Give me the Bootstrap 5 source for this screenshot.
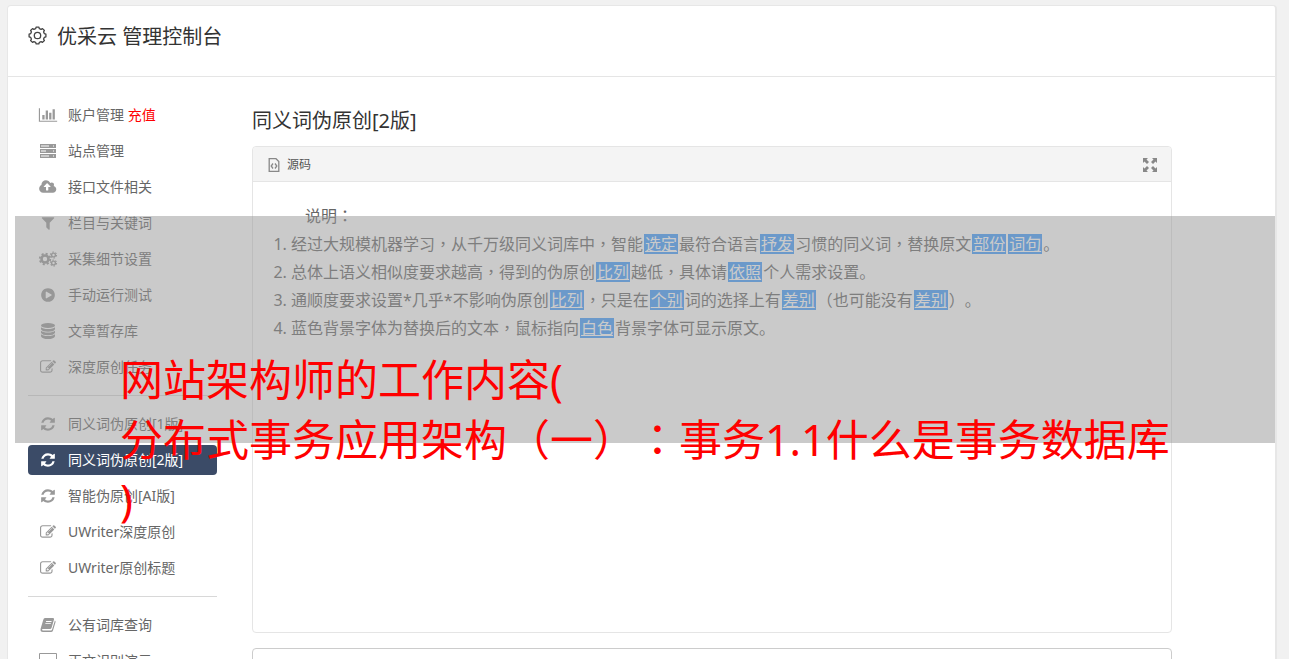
<!DOCTYPE html>
<html lang="zh-CN">
<head>
<meta charset="utf-8">
<meta name="viewport" content="width=device-width, initial-scale=1">
<title>优采云 管理控制台</title>
<link href="https://cdn.jsdelivr.net/npm/bootstrap@5.3.0/dist/css/bootstrap.min.css" rel="stylesheet">
<style>
body{background:#f1f1f1;color:#666;font-family:"Noto Sans","Noto Sans CJK SC",sans-serif;font-size:14px;line-height:20px;padding:5px 12px 0 7px;text-spacing-trim:space-all}
.console{border:1px solid #e7e7e7;border-right-width:2px;border-bottom:0;border-radius:4px 4px 0 0;background:#fff}
.console-head{height:71px;padding:16px 20px;border-bottom:1px solid #e5e5e5;gap:10px}
.console-head h1,.main h2{font-size:20px;line-height:30px;color:#333;font-weight:400}
.layout{padding:23px 103px 0 20px;gap:35px}
.side{width:189px}
.side .nav-link{display:flex;align-items:center;height:30px;margin-bottom:6px;padding:0 10px;color:#666;border-radius:4px;white-space:nowrap}
.side .nav-link svg{width:20px;height:16px;margin-right:10px;fill:#999;flex:none}
.side .nav-link.active{background:#3b4b67;color:#fff}
.side .nav-link.active svg{fill:#fff}
.side hr{margin:13px 0;border-color:#d8d8d8;opacity:1}
.recharge{color:#f00}
.main{padding-top:6px;min-width:0}
.main h2{margin-bottom:10px}
.editor{border:1px solid #e5e5e5;border-radius:4px}
.editor-bar{height:35px;padding:2px 14px 0 15px;background:#f4f4f4;border-bottom:1px solid #e5e5e5;font-size:12px;border-radius:4px 4px 0 0}
.bar-btn{border:0;background:none;padding:0;color:#555;display:flex;align-items:center;gap:7px}
.editor-body{min-height:450px;padding:20px;font-size:16px;line-height:28px}
.editor-body p{padding-left:32px}
.editor-body ol{padding-left:18px}
.mid{font-family:"Noto Sans","Noto Sans CJK TC",sans-serif}
.swap{background:#409cff;color:#fff;padding:0 1px;margin:0 1px;line-height:20px;display:inline-block}
.swap:hover{color:#fff}
.source{height:80px;margin-top:15px;border:1px solid #ccc;border-radius:4px;resize:none}
.banner{left:7px;right:0;top:210px;height:227px;padding:134px 0 0 105px;background:rgba(150,150,150,.5);color:#f00;font-size:43px;line-height:60px;pointer-events:none;white-space:nowrap}
</style>
</head>
<body class="vh-100 overflow-hidden">
<svg class="d-none">
<symbol id="chart" viewBox="0 0 2048 1792"><path d="M640 896v512h-256v-512h256zm384-512v1024h-256v-1024h256zm1024 1152v128h-2048v-1536h128v1408h1920zm-640-896v768h-256v-768h256zm384-384v1152h-256v-1152h256z"/></symbol>
<symbol id="server" viewBox="-2 -1 20 16"><path fill-rule="evenodd" d="M0 0h16v4H0zM1 1.500v1h8v-1zM13 1.500v1h1v-1zM0 5h16v4H0zM1 6.500v1h5v-1zM13 6.500v1h1v-1zM0 10h16v4H0zM1 11.500v1h8v-1zM13 11.500v1h1v-1z"/></symbol>
<symbol id="cloud" viewBox="0 0 1856 1792"><path d="M1216 864q0-14-9-23l-352-352q-9-9-23-9t-23 9l-351 351q-10 12-10 24 0 14 9 23t23 9h224v352q0 13 9.500 22.500t22.500 9.500h192q13 0 22.500-9.500t9.500-22.500v-352h224q13 0 22.500-9.500t9.500-22.500zm640 288q0 159-112.500 271.500t-271.500 112.500h-1088q-185 0-316.500-131.500t-131.500-316.500q0-130 70-240t188-165q-2-30-2-43 0-212 150-362t362-150q156 0 285.500 87t188.500 231q71-62 166-62 106 0 181 75t75 181q0 76-41 138 130 31 213.500 135.500t83.500 238.500z"/></symbol>
<symbol id="filter" viewBox="0 0 1792 1792"><path d="M1595 295q17 41-14 70l-493 493v742q0 42-39 59-13 5-25 5-27 0-45-19l-256-256q-19-19-19-45v-486l-493-493q-31-29-14-70 17-39 59-39h1280q42 0 59 39z"/></symbol>
<symbol id="cogs" viewBox="0 0 20 16"><g fill="none" stroke="#999"><circle cx="7" cy="8" r="3.500" stroke-width="2.600"/><circle cx="7" cy="8" r="5.300" stroke-width="1.800" stroke-dasharray="2.080 2.080"/><circle cx="15.500" cy="4" r="1.900" stroke-width="1.400"/><circle cx="15.500" cy="4" r="3" stroke-width="1.200" stroke-dasharray="1.570 1.570"/><circle cx="15.500" cy="12" r="1.900" stroke-width="1.400"/><circle cx="15.500" cy="12" r="3" stroke-width="1.200" stroke-dasharray="1.570 1.570"/></g></symbol>
<symbol id="play" viewBox="0 0 1792 1792"><path d="M896 128q209 0 385.500 103t279.500 279.500 103 385.500-103 385.500-279.500 279.500-385.500 103-385.500-103-279.500-279.500-103-385.500 103-385.500 279.500-279.500 385.500-103zm384 823q32-18 32-55t-32-55l-544-320q-31-19-64-1-32 19-32 56v640q0 37 32 56 16 8 32 8 17 0 32-9z"/></symbol>
<symbol id="db" viewBox="0 0 14 16"><ellipse cx="7" cy="2.500" rx="7" ry="2.500"/><path d="M0 4.200Q2 6 7 6t7-1.800v2Q13 8.700 7 8.700T0 6.200zM0 7.700Q2 9.500 7 9.500t7-1.800v2q-1 2.500-7 2.500T0 9.700zM0 11.200Q2 13 7 13t7-1.800v2Q13 16 7 16t-7-2.800z"/></symbol>
<symbol id="edit" viewBox="0 0 1792 1792"><path d="M888 1184l116-116-152-152-116 116v56h96v96h56zm440-720q-16-16-33 1l-350 350q-17 17-1 33t33-1l350-350q17-17 1-33zm80 594v190q0 119-84.500 203.500t-203.500 84.500h-832q-119 0-203.500-84.500t-84.500-203.500v-832q0-119 84.500-203.500t203.500-84.500h832q63 0 117 25 15 7 18 23 3 17-9 29l-49 49q-14 14-32 8-23-6-45-6h-832q-66 0-113 47t-47 113v832q0 66 47 113t113 47h832q66 0 113-47t47-113v-126q0-13 9-22l64-64q15-15 35-7t20 29zm-96-738l288 288-672 672h-288v-288zm444 132l-92 92-288-288 92-92q28-28 68-28t68 28l152 152q28 28 28 68t-28 68z"/></symbol>
<symbol id="refresh" viewBox="0 0 1792 1792"><path d="M1639 1056q0 5-1 7-64 268-268 434.500t-478 166.500q-146 0-282.500-55t-243.500-157l-129 129q-19 19-45 19t-45-19-19-45v-448q0-26 19-45t45-19h448q26 0 45 19t19 45-19 45l-137 137q71 66 161 102t187 36q134 0 250-65t186-179q11-17 53-117 8-23 30-23h192q13 0 22.500 9.500t9.500 22.500zm25-800v448q0 26-19 45t-45 19h-448q-26 0-45-19t-19-45 19-45l138-138q-148-137-349-137-134 0-250 65t-186 179q-11 17-53 117-8 23-30 23h-199q-13 0-22.500-9.500t-9.500-22.500v-7q65-268 270-434.500t480-166.500q146 0 284 55.500t245 156.500l130-129q19-19 45-19t45 19 19 45z"/></symbol>
<symbol id="book" viewBox="0 0 16 16"><path fill-rule="evenodd" d="M5 1h8q1.500 0 1 1.500L11.500 11q-.4 1-1.500 1H3q-1.200 0-1 .8t1.200.7H11q.8 0 1-.8l2.500-8 .4-1.200q1 .5.600 1.700L13 13.500Q12.500 15 11 15H3Q0 15 .6 11.800L3.200 3Q3.700 1 5 1zm1.200 3-.3.900h5.500l.3-.9zm-.7 2.200-.3.900h5.500l.3-.9z"/></symbol>
<symbol id="screen" viewBox="0 0 20 16"><path fill-rule="evenodd" d="M2 0h16q1 0 1 1v11q0 1-1 1h-6v2H8v-2H2q-1 0-1-1V1q0-1 1-1zm0 1v9h16V1z"/></symbol>
</svg>

<div class="console position-relative h-100">
  <header class="console-head d-flex align-items-start">
    <svg class="mt-1" width="19" height="19" viewBox="-9.500 -9.500 19 19" fill="none" stroke="#444" stroke-width="1.300" stroke-linejoin="round"><path d="M8.400-1.300V1.300L6.800 1.900 6.100 3.600 6.900 5 5 6.900 3.600 6.100 1.900 6.800 1.300 8.400H-1.300L-1.900 6.800-3.600 6.100-5 6.900-6.900 5-6.100 3.600-6.800 1.900-8.400 1.300V-1.300L-6.800-1.900-6.100-3.600-6.900-5-5-6.900-3.600-6.100-1.900-6.800-1.300-8.400H1.300L1.900-6.800 3.600-6.100 5-6.900 6.900-5 6.100-3.600 6.800-1.900Z"/><circle r="3.200"/></svg>
    <h1 class="m-0">优采云 管理控制台</h1>
  </header>
  <div class="layout d-flex">
    <nav class="side flex-shrink-0">
      <a class="nav-link" href="#"><svg><use href="#chart"/></svg>账户管理&nbsp;<span class="recharge">充值</span></a>
      <a class="nav-link" href="#"><svg><use href="#server"/></svg>站点管理</a>
      <a class="nav-link" href="#"><svg><use href="#cloud"/></svg>接口文件相关</a>
      <a class="nav-link" href="#"><svg><use href="#filter"/></svg>栏目与关键词</a>
      <a class="nav-link" href="#"><svg><use href="#cogs"/></svg>采集细节设置</a>
      <a class="nav-link" href="#"><svg><use href="#play"/></svg>手动运行测试</a>
      <a class="nav-link" href="#"><svg><use href="#db"/></svg>文章暂存库</a>
      <a class="nav-link" href="#"><svg><use href="#edit"/></svg>深度原创任务</a>
      <hr>
      <a class="nav-link" href="#"><svg><use href="#refresh"/></svg>同义词伪原创[1版]</a>
      <a class="nav-link active" href="#"><svg><use href="#refresh"/></svg>同义词伪原创[2版]</a>
      <a class="nav-link" href="#"><svg><use href="#refresh"/></svg>智能伪原创[AI版]</a>
      <a class="nav-link" href="#"><svg><use href="#edit"/></svg>UWriter深度原创</a>
      <a class="nav-link" href="#"><svg><use href="#edit"/></svg>UWriter原创标题</a>
      <hr>
      <a class="nav-link" href="#"><svg><use href="#book"/></svg>公有词库查询</a>
      <a class="nav-link" href="#"><svg><use href="#screen"/></svg>正文识别演示</a>
    </nav>
    <main class="main flex-grow-1">
      <h2>同义词伪原创[2版]</h2>
      <section class="editor">
        <div class="editor-bar d-flex align-items-center justify-content-between">
          <button type="button" class="bar-btn"><svg width="12" height="14" viewBox="0 0 11 14" fill="none" stroke="#888" stroke-width="1.300"><path d="M.7.7H7.500L10.300 3.500V13.300H.7ZM4.500 5.500 2.700 8 4.500 10.500M6.500 5.500 8.300 8 6.500 10.500"/></svg>源码</button>
          <button type="button" class="bar-btn" aria-label="全屏"><svg width="14" height="14" viewBox="0 0 14 14" fill="#888"><path d="M0 0H5L3.500 1.500 6 4 4 6 1.500 3.500 0 5ZM14 0V5L12.500 3.500 10 6 8 4 10.500 1.500 9 0ZM0 14V9L1.500 10.500 4 8 6 10 3.500 12.500 5 14ZM14 14H9L10.500 12.500 8 10 10 8 12.500 10.500 14 9Z"/></svg></button>
        </div>
        <div class="editor-body">
          <p class="m-0">说明<span class="mid" lang="zh-TW">：</span></p>
          <ol class="m-0">
            <li>经过大规模机器学习<span class="mid" lang="zh-TW">，</span>从千万级同义词库中<span class="mid" lang="zh-TW">，</span>智能<a class="swap" href="#">选定</a>最符合语言<a class="swap" href="#">抒发</a>习惯的同义词<span class="mid" lang="zh-TW">，</span>替换原文<a class="swap" href="#">部份</a><a class="swap" href="#">词句</a>。</li>
            <li>总体上语义相似度要求越高<span class="mid" lang="zh-TW">，</span>得到的伪原创<a class="swap" href="#">比列</a>越低<span class="mid" lang="zh-TW">，</span>具体请<a class="swap" href="#">依照</a>个人需求设置。</li>
            <li>通顺度要求设置*几乎*不影响伪原创<a class="swap" href="#">比列</a><span class="mid" lang="zh-TW">，</span>只是在<a class="swap" href="#">个别</a>词的选择上有<a class="swap" href="#">差别</a>（也可能没有<a class="swap" href="#">差别</a>）。</li>
            <li>蓝色背景字体为替换后的文本<span class="mid" lang="zh-TW">，</span>鼠标指向<a class="swap" href="#">白色</a>背景字体可显示原文。</li>
          </ol>
        </div>
      </section>
      <textarea class="source d-block w-100" aria-label="原文"></textarea>
    </main>
  </div>
  <div class="banner position-absolute">网站架构师的工作内容(<br>分布式事务应用架构<span class="mid" lang="zh-TW">（一）：</span>事务1.1什么是事务数据库<br>)</div>
</div>
<script src="https://cdn.jsdelivr.net/npm/bootstrap@5.3.0/dist/js/bootstrap.bundle.min.js"></script>
</body>
</html>
